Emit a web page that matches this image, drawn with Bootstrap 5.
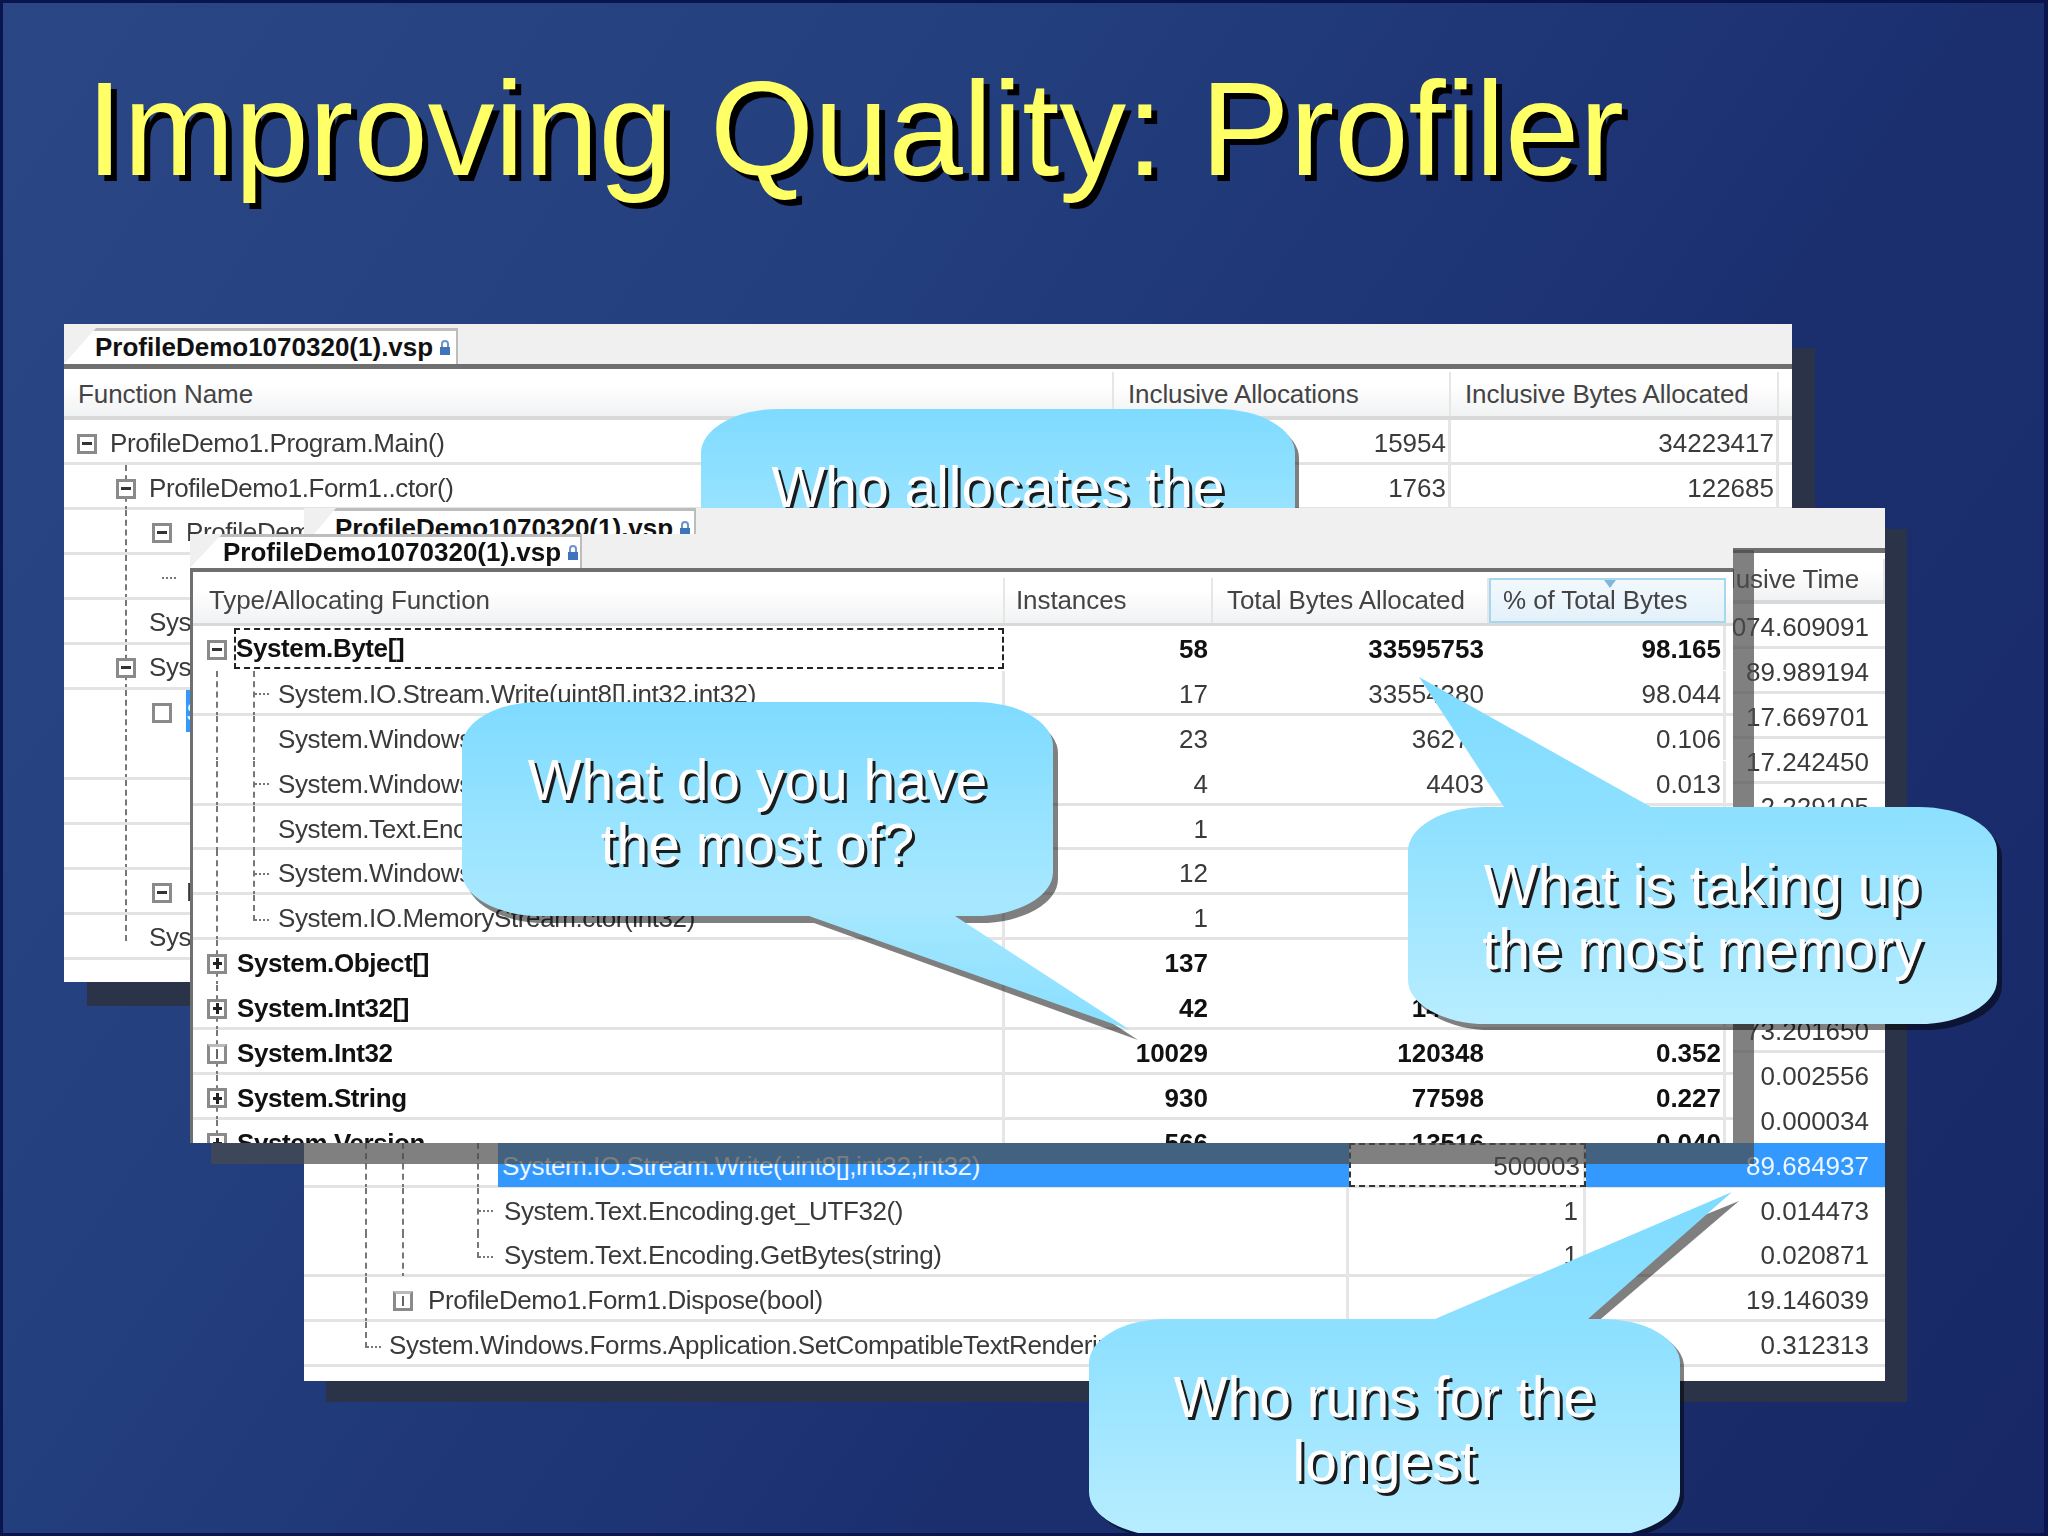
<!DOCTYPE html>
<html lang="en">
<head>
<meta charset="utf-8">
<title>Improving Quality: Profiler</title>
<link href="https://cdn.jsdelivr.net/npm/bootstrap@5.3.0/dist/css/bootstrap.min.css" rel="stylesheet">
<style>
body{margin:0;background:#0a1550}
.slide{width:2048px;height:1536px;padding:62px 0 0 85px;background:linear-gradient(125deg,#2a4685 0%,#24407f 30%,#1b2f6f 65%,#182866 100%);border:3px solid #0a1550;border-right-width:4px;box-sizing:border-box;position:relative;overflow:hidden;font-family:"Liberation Sans",Arial,sans-serif}
.ttl{font-family:"Liberation Sans",Arial,sans-serif;font-size:133.7px;line-height:134px;font-weight:400;margin:-3px 0 0 -2px;color:#ffff66;text-shadow:6px 6px 0 #000;white-space:nowrap}

/* windows */
.win{position:absolute;font-size:26px;color:#3a3a3a;filter:blur(.55px)}
.win-a{left:61px;top:321px;width:1728px;height:658px;background:#fff;box-shadow:23px 24px 0 #2b3349;z-index:1}
.win-c{left:301px;top:505px;width:1581px;height:873px;background:#fff;box-shadow:22px 21px 0 #2b3349;z-index:3}
.win-b{left:187px;top:526px;width:1543px;height:614px;box-shadow:21px 21px 0 rgba(74,74,74,.7);z-index:4}

.strip{background:#f0f0f0;display:flex;align-items:flex-end;border-bottom:5px solid #6f6f6f;box-sizing:border-box}
.win-a .strip{height:45px}
.win-c .strip{height:45px}
.win-b .strip{height:38px;margin-top:5px;border-bottom-width:4px}
.dtab{background:#fff;height:36px;color:#111;font-weight:700;display:flex;align-items:center;gap:6px;border-top:3px solid #bdbdbd;border-right:2px solid #bdbdbd;clip-path:polygon(32px 0,100% 0,100% 100%,0 100%);box-sizing:border-box;white-space:nowrap}
.win-a .dtab{width:394px;padding-left:31px}
.win-c .dtab{width:392px;padding-left:31px;margin-bottom:2px;height:38px}
.win-b .dtab{width:392px;padding-left:33px;height:34px}
.lck{width:12px;height:16px;flex:none}

.thd,.trow{display:grid;box-sizing:border-box}
.thd{height:51px;background:linear-gradient(#fff 35%,#f1f2f3);border-bottom:4px solid #d9d9d9;align-items:center;padding-top:3px}
.trow{border-bottom:3px solid #e3e3e3;align-items:stretch;white-space:nowrap}
.win-a .thd,.win-a .trow{grid-template-columns:1050px 337px 328px 13px}
.win-a .trow{height:45px}
.win-a .nc{padding-right:2px}
.win-b .thd,.win-b .trow{grid-template-columns:812px 208px 276px 237px 7px}
.win-b .thd{height:54px;padding-top:6px;border-bottom-width:3px}
.win-b .trow{height:44.9px}
.win-b .nc.vl{padding-right:2px}
.win-c .thd,.win-c .trow{grid-template-columns:1045px 237px 299px}
.win-c .thd{padding-top:6px}
.win-c .trow{height:44.9px}
.bdy{background:#fff;border-left:3px solid #6f6f6f}
.nol{border-bottom-color:transparent}
.hc{padding-left:14px;height:100%;display:flex;align-items:center;border-right:2px solid #e6e6e6;color:#444;letter-spacing:-.1px}
.win-b .hc:first-child{padding-left:16px}
.win-b .hc:nth-child(2){padding-left:11px}
.nc{text-align:end;padding:3px 5px 0 0;line-height:41px}
.vl{border-right:3px solid #e6e6e6}
.tc{display:flex;align-items:center;overflow:hidden;min-width:0;padding-top:3px}
.lb{color:#3a3a3a;letter-spacing:-.4px}
.trow.fw-bold .lb,.trow.fw-bold .nc{color:#111}
.gd{align-self:stretch;flex:none;display:flex;align-items:center;border-left:2px dashed #777;margin:-3px 0}
.gd.off{border-left-color:transparent}
.gd.end{align-self:flex-start;height:26px;margin-bottom:0;align-items:flex-end}
.stb{flex:none;width:14px;border-top:2px dotted #777;margin-right:6px}

/* expander boxes */
.exb{flex:none;width:20px;height:20px;background:linear-gradient(#333,#333) center/10px 3px no-repeat,#fff;border:3px solid #8a8a8a;box-sizing:border-box}
.exb.pl{background:linear-gradient(#222,#222) center/9px 3px no-repeat,linear-gradient(#222,#222) center/3px 11px no-repeat,#fff}
.exb.vt{background:linear-gradient(#666,#666) center/2px 10px no-repeat,#fff;border-top-color:#bbb}
.exb.nl{background:#fff}
.win-b .gd .exb,.win-a .gd .exb{margin-left:-11px}

/* column indents */
.win-a .i1{margin-left:61px;width:24px}
.win-a .l2{margin-left:13px}
.win-a .b0{margin:0 13px 0 13px}
.win-a .b2{margin-left:3px;margin-right:14px}
.win-b .a0{margin-left:23px;width:21px}
.win-b .a1{margin-left:23px;width:37px}
.win-b .a2{width:21px}
.win-c .g0{margin-left:61px;width:37px}
.win-c .g1{width:75px}
.win-c .g2{width:21px}
.win-c .g3{margin-left:61px;width:24px}
.win-c .g4{margin-left:61px;width:28px}
.win-c .g5{width:27px}
.win-c .mb{margin-right:15px}
.focs{outline:2px dashed #222;outline-offset:-3px;align-self:stretch;display:flex;align-items:center;padding-left:3px;flex:1;margin:-2px 0 0 -4px}
.sel{background:#3399ff}
.sel.lb{margin-top:-3px;padding-top:3px;line-height:41px}
.sel .lb,.sel.lb,.sel.nc{color:#eef6ff}
.cur{outline:2px dashed #333;outline-offset:-2px;padding-right:3px}
.srt{background:linear-gradient(#f3f9fd,#e2f1fa);outline:2px solid #a9d6ef;outline-offset:-2px;position:relative}
.srt::before{content:"";position:absolute;left:115px;top:2px;border:6px solid transparent;border-top:8px solid #7fb8d8;border-bottom:0}

/* callouts */
.cout{position:absolute;color:#fff;text-align:center;font-size:57px;line-height:64px;text-shadow:3px 3px 0 #1c1c1c}
.cout svg{position:absolute;left:0;top:0;overflow:visible;pointer-events:none}
.cout p{position:relative;margin:0;padding-top:46px}
.cout-1{left:698px;top:406px;width:594px;height:217px;z-index:2}
.cout-2{left:459px;top:699px;width:591px;height:214px;z-index:6}
.cout-3{left:1405px;top:804px;width:589px;height:217px;z-index:6}
.cout-4{left:1086px;top:1316px;width:591px;height:217px;z-index:6}
</style>
</head>
<body>
<div class="slide">
  <h1 class="ttl">Improving Quality: Profiler</h1>

  <!-- back window: call tree by allocations -->
  <div class="win win-a overflow-hidden">
    <div class="strip"><div class="dtab">ProfileDemo1070320(1).vsp<svg class="lck" viewBox="0 0 12 16"><path d="M3 7V4a3 3 0 0 1 6 0v3" fill="none" stroke="#6d94c8" stroke-width="2"/><rect x="1" y="7" width="10" height="8" fill="#3f74bd"/></svg></div></div>
    <div class="thd"><div class="hc">Function Name</div><div class="hc">Inclusive Allocations</div><div class="hc">Inclusive Bytes Allocated</div><div></div></div>
    <div class="trow"><div class="tc"><span class="exb b0"></span><span class="lb">ProfileDemo1.Program.Main()</span></div><div class="nc vl">15954</div><div class="nc vl">34223417</div><div></div></div>
    <div class="trow"><div class="tc"><span class="gd i1"><span class="exb"></span></span><span class="lb">ProfileDemo1.Form1..ctor()</span></div><div class="nc vl">1763</div><div class="nc vl">122685</div><div></div></div>
    <div class="trow"><div class="tc"><span class="gd i1"></span><span class="exb b2"></span><span class="lb">ProfileDemo1.Form1.InitializeComponent()</span></div><div></div><div></div><div></div></div>
    <div class="trow"><div class="tc"><span class="gd i1"></span><span class="stb l2"></span><span class="lb ms-4">System.Windows.Forms.Form.ctor()</span></div><div></div><div></div><div></div></div>
    <div class="trow"><div class="tc"><span class="gd i1"></span><span class="lb">System.Windows.Forms.Application.EnableVisualStyles()</span></div><div></div><div></div><div></div></div>
    <div class="trow"><div class="tc"><span class="gd i1"><span class="exb"></span></span><span class="lb">System.Windows.Forms.Application.Run()</span></div><div></div><div></div><div></div></div>
    <div class="trow nol"><div class="tc"><span class="gd i1"></span><span class="exb nl b2"></span><span class="sel lb flex-grow-1">System.Windows.Forms.Form.OnLoad()</span></div><div></div><div></div><div></div></div>
    <div class="trow"><div class="tc"><span class="gd i1"></span></div><div></div><div></div><div></div></div>
    <div class="trow"><div class="tc"><span class="gd i1"></span></div><div></div><div></div><div></div></div>
    <div class="trow"><div class="tc"><span class="gd i1"></span></div><div></div><div></div><div></div></div>
    <div class="trow"><div class="tc"><span class="gd i1"></span><span class="exb b2"></span><span class="lb">ProfileDemo1.Form1.Dispose(bool)</span></div><div></div><div></div><div></div></div>
    <div class="trow"><div class="tc"><span class="gd i1 end"></span><span class="lb">System.Windows.Forms.Application.SetCompatibleTextRendering()</span></div><div></div><div></div><div></div></div>
  </div>

  <div class="cout cout-1">
    <svg width="594" height="217"><defs><linearGradient id="gr1" x1="0" y1="0" x2="0" y2="1"><stop offset="0" stop-color="#7edbff"/><stop offset="1" stop-color="#b6ecff"/></linearGradient></defs>
      <path d="M78 0H516A78 44 0 0 1 594 44V173A78 44 0 0 1 516 217H78A78 44 0 0 1 0 173V44A78 44 0 0 1 78 0Z" transform="translate(4 5)" fill="#000" fill-opacity=".5"/>
      <path d="M78 0H516A78 44 0 0 1 594 44V173A78 44 0 0 1 516 217H78A78 44 0 0 1 0 173V44A78 44 0 0 1 78 0Z" fill="url(#gr1)"/></svg>
    <p>Who allocates the</p>
  </div>

  <!-- right window: exclusive time -->
  <div class="win win-c overflow-hidden">
    <div class="strip"><div class="dtab">ProfileDemo1070320(1).vsp<svg class="lck" viewBox="0 0 12 16"><path d="M3 7V4a3 3 0 0 1 6 0v3" fill="none" stroke="#6d94c8" stroke-width="2"/><rect x="1" y="7" width="10" height="8" fill="#3f74bd"/></svg></div></div>
    <div class="thd"><div></div><div></div><div class="hc justify-content-end pe-4">Inclusive Time</div></div>
    <div class="trow"><div></div><div></div><div class="nc pe-3">1074.609091</div></div>
    <div class="trow"><div></div><div></div><div class="nc pe-3">89.989194</div></div>
    <div class="trow"><div></div><div></div><div class="nc pe-3">17.669701</div></div>
    <div class="trow"><div></div><div></div><div class="nc pe-3">17.242450</div></div>
    <div class="trow"><div></div><div></div><div class="nc pe-3">2.229105</div></div>
    <div class="trow"><div></div><div></div><div></div></div>
    <div class="trow"><div></div><div></div><div></div></div>
    <div class="trow"><div></div><div></div><div></div></div>
    <div class="trow"><div></div><div></div><div></div></div>
    <div class="trow"><div></div><div></div><div class="nc pe-3">73.201650</div></div>
    <div class="trow nol"><div></div><div></div><div class="nc pe-3">0.002556</div></div>
    <div class="trow nol"><div></div><div></div><div class="nc pe-3">0.000034</div></div>
    <div class="trow"><div class="tc"><span class="gd g0"></span><span class="gd g1"></span><span class="gd g2"></span><span class="sel lb flex-grow-1 ps-1 align-self-stretch">System.IO.Stream.Write(uint8[],int32,int32)</span></div><div class="nc cur vl">500003</div><div class="nc sel pe-3">89.684937</div></div>
    <div class="trow nol"><div class="tc vl"><span class="gd g0"></span><span class="gd g1"></span><span class="gd g5"><span class="stb"></span></span><span class="lb">System.Text.Encoding.get_UTF32()</span></div><div class="nc vl">1</div><div class="nc pe-3">0.014473</div></div>
    <div class="trow"><div class="tc vl"><span class="gd g0"></span><span class="gd g1"></span><span class="gd g5 end"><span class="stb"></span></span><span class="lb">System.Text.Encoding.GetBytes(string)</span></div><div class="nc vl">1</div><div class="nc pe-3">0.020871</div></div>
    <div class="trow"><div class="tc vl"><span class="gd g4"></span><span class="exb vt mb"></span><span class="lb">ProfileDemo1.Form1.Dispose(bool)</span></div><div class="vl"></div><div class="nc pe-3">19.146039</div></div>
    <div class="trow"><div class="tc vl"><span class="gd g3 end"><span class="stb"></span></span><span class="lb">System.Windows.Forms.Application.SetCompatibleTextRenderingDefault(bool)</span></div><div class="vl"></div><div class="nc pe-3">0.312313</div></div>
  </div>

  <!-- front window: allocation summary -->
  <div class="win win-b overflow-hidden">
    <div class="strip"><div class="dtab">ProfileDemo1070320(1).vsp<svg class="lck" viewBox="0 0 12 16"><path d="M3 7V4a3 3 0 0 1 6 0v3" fill="none" stroke="#6d94c8" stroke-width="2"/><rect x="1" y="7" width="10" height="8" fill="#3f74bd"/></svg></div></div>
    <div class="bdy">
    <div class="thd"><div class="hc">Type/Allocating Function</div><div class="hc">Instances</div><div class="hc">Total Bytes Allocated</div><div class="hc srt">% of Total Bytes</div><div></div></div>
    <div class="trow nol fw-bold"><div class="tc"><span class="gd a0 off"><span class="exb"></span></span><span class="focs"><span class="lb">System.Byte[]</span></span></div><div class="nc">58</div><div class="nc">33595753</div><div class="nc vl">98.165</div><div></div></div>
    <div class="trow"><div class="tc vl"><span class="gd a1"></span><span class="gd a2"><span class="stb"></span></span><span class="lb ms-1">System.IO.Stream.Write(uint8[],int32,int32)</span></div><div class="nc">17</div><div class="nc">33554380</div><div class="nc vl">98.044</div><div></div></div>
    <div class="trow nol"><div class="tc vl"><span class="gd a1"></span><span class="gd a2"></span><span class="lb ms-1">System.Windows.Forms.Form.ctor()</span></div><div class="nc">23</div><div class="nc">36277</div><div class="nc vl">0.106</div><div></div></div>
    <div class="trow"><div class="tc vl"><span class="gd a1"></span><span class="gd a2"><span class="stb"></span></span><span class="lb ms-1">System.Windows.Forms.Control.ctor()</span></div><div class="nc">4</div><div class="nc">4403</div><div class="nc vl">0.013</div><div></div></div>
    <div class="trow"><div class="tc vl"><span class="gd a1"></span><span class="gd a2"></span><span class="lb ms-1">System.Text.Encoding.GetBytes(string)</span></div><div class="nc">1</div><div class="nc"></div><div class="vl"></div><div></div></div>
    <div class="trow"><div class="tc vl"><span class="gd a1"></span><span class="gd a2"><span class="stb"></span></span><span class="lb ms-1">System.Windows.Forms.Form.OnLoad()</span></div><div class="nc">12</div><div class="nc"></div><div class="vl"></div><div></div></div>
    <div class="trow"><div class="tc vl"><span class="gd a1"></span><span class="gd a2 end"><span class="stb"></span></span><span class="lb ms-1">System.IO.MemoryStream.ctor(int32)</span></div><div class="nc">1</div><div class="nc"></div><div class="vl"></div><div></div></div>
    <div class="trow nol fw-bold"><div class="tc vl"><span class="gd a0"><span class="exb pl"></span></span><span class="lb">System.Object[]</span></div><div class="nc">137</div><div class="nc">15984</div><div class="vl"></div><div></div></div>
    <div class="trow fw-bold"><div class="tc vl"><span class="gd a0"><span class="exb pl"></span></span><span class="lb">System.Int32[]</span></div><div class="nc">42</div><div class="nc">14520</div><div class="vl"></div><div></div></div>
    <div class="trow fw-bold"><div class="tc vl"><span class="gd a0"><span class="exb vt"></span></span><span class="lb">System.Int32</span></div><div class="nc">10029</div><div class="nc">120348</div><div class="nc vl">0.352</div><div></div></div>
    <div class="trow fw-bold"><div class="tc vl"><span class="gd a0"><span class="exb pl"></span></span><span class="lb">System.String</span></div><div class="nc">930</div><div class="nc">77598</div><div class="nc vl">0.227</div><div></div></div>
    <div class="trow fw-bold"><div class="tc vl"><span class="gd a0"><span class="exb pl"></span></span><span class="lb">System.Version</span></div><div class="nc">566</div><div class="nc">13516</div><div class="nc vl">0.040</div><div></div></div>
    </div>
  </div>

  <div class="cout cout-2">
    <svg width="591" height="214"><defs><linearGradient id="gr2" x1="0" y1="0" x2="0" y2="1"><stop offset="0" stop-color="#7edbff"/><stop offset=".6" stop-color="#a8e8ff"/><stop offset="1" stop-color="#88dfff"/></linearGradient></defs>
      <path d="M78 0H513A78 44 0 0 1 591 44V170A78 44 0 0 1 513 214H493L671 331L347 214H78A78 44 0 0 1 0 170V44A78 44 0 0 1 78 0Z" transform="translate(5 7)" fill="#000" fill-opacity=".5"/>
      <path d="M78 0H513A78 44 0 0 1 591 44V170A78 44 0 0 1 513 214H493L668 328L347 214H78A78 44 0 0 1 0 170V44A78 44 0 0 1 78 0Z" fill="url(#gr2)"/></svg>
    <p>What do you have<br>the most of?</p>
  </div>

  <div class="cout cout-3">
    <svg width="589" height="217"><defs><linearGradient id="gr3" x1="0" y1="0" x2="0" y2="1"><stop offset="0" stop-color="#7edbff"/><stop offset=".45" stop-color="#90e1ff"/><stop offset="1" stop-color="#b8edff"/></linearGradient></defs>
      <path d="M78 0H511A78 44 0 0 1 589 44V173A78 44 0 0 1 511 217H78A78 44 0 0 1 0 173V44A78 44 0 0 1 78 0Z" transform="translate(5 6)" fill="#000" fill-opacity=".5"/>
      <path d="M78 0H96L11 -130L243 0H511A78 44 0 0 1 589 44V173A78 44 0 0 1 511 217H78A78 44 0 0 1 0 173V44A78 44 0 0 1 78 0Z" fill="url(#gr3)"/></svg>
    <p>What is taking up<br>the most memory</p>
  </div>

  <div class="cout cout-4">
    <svg width="591" height="217"><defs><linearGradient id="gr4" x1="0" y1="0" x2="0" y2="1"><stop offset="0" stop-color="#7edbff"/><stop offset=".45" stop-color="#90e1ff"/><stop offset="1" stop-color="#b8edff"/></linearGradient></defs>
      <path d="M78 0H346L646 -122L503 0H513A78 44 0 0 1 591 44V173A78 44 0 0 1 513 217H78A78 44 0 0 1 0 173V44A78 44 0 0 1 78 0Z" transform="translate(4 4)" fill="#000" fill-opacity=".5"/>
      <path d="M78 0H346L643 -127L499 0H513A78 44 0 0 1 591 44V173A78 44 0 0 1 513 217H78A78 44 0 0 1 0 173V44A78 44 0 0 1 78 0Z" fill="url(#gr4)"/></svg>
    <p>Who runs for the<br>longest</p>
  </div>
</div>
<script src="https://cdn.jsdelivr.net/npm/bootstrap@5.3.0/dist/js/bootstrap.bundle.min.js"></script>
</body>
</html>
